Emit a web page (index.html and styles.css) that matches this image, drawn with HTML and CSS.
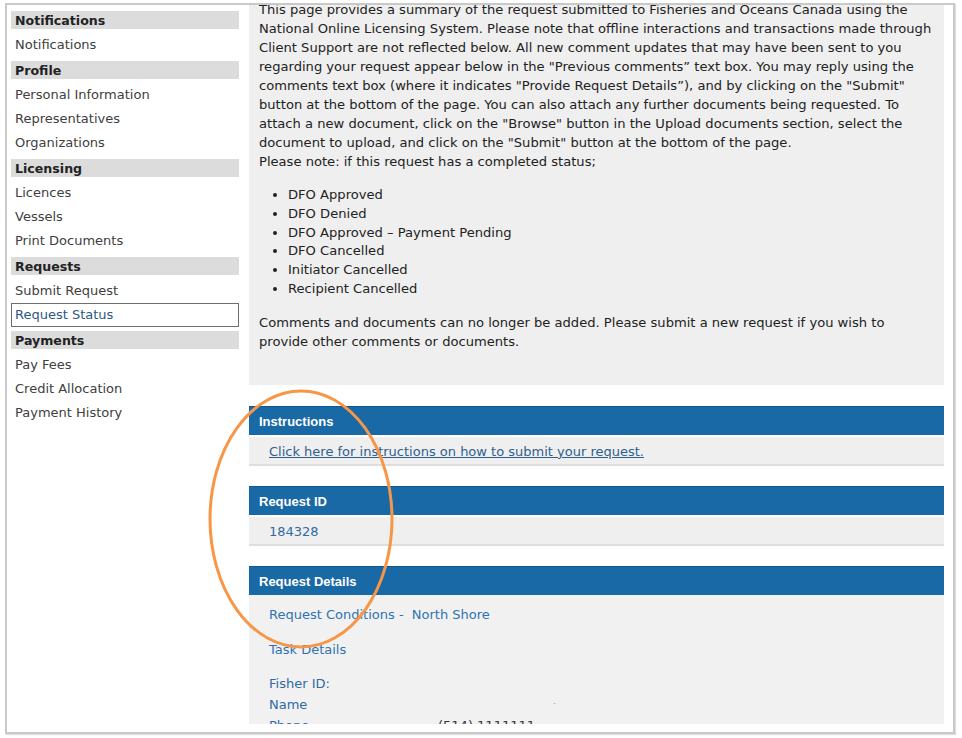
FILE: index.html
```html
<!DOCTYPE html>
<html lang="en">
<head>
<meta charset="utf-8">
<title>Request Status</title>
<link rel="stylesheet" href="styles.css">
</head>
<body>
<div class="frame">
  <div class="viewport">
    <nav class="sidebar">
      <div class="nav-group">
        <div class="nav-head">Notifications</div>
        <ul class="nav-list">
          <li class="nav-item">Notifications</li>
        </ul>
      </div>
      <div class="nav-group">
        <div class="nav-head">Profile</div>
        <ul class="nav-list">
          <li class="nav-item">Personal Information</li>
          <li class="nav-item">Representatives</li>
          <li class="nav-item">Organizations</li>
        </ul>
      </div>
      <div class="nav-group">
        <div class="nav-head">Licensing</div>
        <ul class="nav-list">
          <li class="nav-item">Licences</li>
          <li class="nav-item">Vessels</li>
          <li class="nav-item">Print Documents</li>
        </ul>
      </div>
      <div class="nav-group">
        <div class="nav-head">Requests</div>
        <ul class="nav-list">
          <li class="nav-item">Submit Request</li>
          <li class="nav-item nav-current">Request Status</li>
        </ul>
      </div>
      <div class="nav-group">
        <div class="nav-head">Payments</div>
        <ul class="nav-list">
          <li class="nav-item">Pay Fees</li>
          <li class="nav-item">Credit Allocation</li>
          <li class="nav-item">Payment History</li>
        </ul>
      </div>
    </nav>

    <main class="content">
      <div class="intro">
        <p class="intro-text">This page provides a summary of the request submitted to Fisheries and Oceans Canada using the<br>National Online Licensing System. Please note that offline interactions and transactions made through<br>Client Support are not reflected below. All new comment updates that may have been sent to you<br>regarding your request appear below in the "Previous comments” text box. You may reply using the<br>comments text box (where it indicates "Provide Request Details”), and by clicking on the "Submit"<br>button at the bottom of the page. You can also attach any further documents being requested. To<br>attach a new document, click on the "Browse" button in the Upload documents section, select the<br>document to upload, and click on the "Submit" button at the bottom of the page.<br>Please note: if this request has a completed status;</p>
        <ul class="status-list">
          <li>DFO Approved</li>
          <li>DFO Denied</li>
          <li>DFO Approved – Payment Pending</li>
          <li>DFO Cancelled</li>
          <li>Initiator Cancelled</li>
          <li>Recipient Cancelled</li>
        </ul>
        <p class="intro-text">Comments and documents can no longer be added. Please submit a new request if you wish to<br>provide other comments or documents.</p>
      </div>

      <section class="panel panel-first">
        <h2 class="panel-head">Instructions</h2>
        <div class="panel-row"><a class="panel-link" href="#">Click here for instructions on how to submit your request.</a></div>
      </section>

      <section class="panel">
        <h2 class="panel-head">Request ID</h2>
        <div class="panel-row"><span class="req-id">184328</span></div>
      </section>

      <section class="panel">
        <h2 class="panel-head">Request Details</h2>
        <div class="panel-body">
          <div class="detail-link">Request Conditions -&nbsp; North Shore</div>
          <div class="detail-link detail-task">Task Details</div>
          <div class="fields">
            <div class="field"><span class="field-label">Fisher ID:</span><span class="field-value"></span></div>
            <div class="field"><span class="field-label">Name</span><span class="field-value field-dot">.</span></div>
            <div class="field"><span class="field-label">Phone</span><span class="field-value">(514) 1111111</span></div>
          </div>
        </div>
      </section>
    </main>
  </div>
</div>
<svg class="annotation" width="962" height="738" viewBox="0 0 962 738" aria-hidden="true">
  <ellipse cx="301" cy="519" rx="91" ry="128" fill="none" stroke="#f79646" stroke-width="3"/>
</svg>
</body>
</html>
```

FILE: styles.css
```css
html, body {
  margin: 0;
  padding: 0;
  background: #ffffff;
}

body {
  font-family: "DejaVu Sans", Verdana, sans-serif;
  color: #222222;
  width: 962px;
  height: 738px;
  overflow: hidden;
  position: relative;
}

.frame {
  margin: 3px 0 0 5px;
  width: 946px;
  height: 727px;
  border: 2px solid #c9c9c9;
  box-shadow: 1px 1px 1px rgba(0, 0, 0, 0.12);
  background: #ffffff;
}

.viewport {
  height: 719px;
  overflow: hidden;
  display: flex;
  align-items: flex-start;
  padding-left: 4px;
  gap: 10px;
}

/* Sidebar */
.sidebar {
  width: 228px;
  flex: none;
  margin-top: 6px;
}

.nav-head {
  background: #dcdcdc;
  height: 18px;
  line-height: 19px;
  padding-left: 4px;
  font-size: 12.6px;
  font-weight: bold;
  color: #222222;
}

.nav-list {
  list-style: none;
  margin: 0;
  padding: 4px 0;
}

.nav-item {
  height: 24px;
  line-height: 24px;
  padding-left: 4px;
  font-size: 13px;
  color: #404040;
  box-sizing: border-box;
}

.nav-current {
  border: 1px solid #6e6e6e;
  color: #2d5886;
  padding-left: 3px;
  line-height: 22px;
}

/* Content */
.content {
  width: 695px;
  flex: none;
  margin-top: -5px;
  font-size: 13.1px;
}

.intro {
  background: #efefef;
  padding: 0 8px 34px 10px;
}

.intro-text {
  margin: 0;
  line-height: 19px;
  white-space: nowrap;
}

.status-list {
  margin: 15px 0 14px 0;
  padding-left: 29px;
  line-height: 18.8px;
}

.panel {
  margin-top: 20px;
}

.panel-first {
  margin-top: 21px;
}

.panel-head {
  margin: 0;
  height: 28px;
  line-height: 30px;
  border-top: 1px solid #0d5892;
  background: #1969a6;
  color: #ffffff;
  font-family: "Liberation Sans", Arial, sans-serif;
  font-size: 13px;
  font-weight: bold;
  padding-left: 10px;
}

.panel-row {
  margin-top: 2px;
  height: 25px;
  padding-top: 2px;
  line-height: 26px;
  background: #efefef;
  border-bottom: 2px solid #dedede;
  padding-left: 20px;
  font-size: 13px;
}

.panel-link {
  color: #2f5f8e;
  text-decoration: underline;
}

.req-id {
  color: #2f6aa2;
}

.panel-body {
  background: #f1f1f1;
  padding: 10px 0 20px 20px;
  font-size: 13px;
  height: 200px;
}

.detail-link {
  line-height: 19px;
  color: #2f73b1;
}

.detail-task {
  margin-top: 16px;
}

.fields {
  margin-top: 14px;
}

.field {
  display: flex;
  line-height: 21px;
}

.field-label {
  width: 169px;
  flex: none;
  color: #2f6aa6;
}

.field-value {
  color: #333333;
}

.field-dot {
  color: #9a9a9a;
  padding-left: 115px;
  font-size: 9px;
  line-height: 14px;
}

/* Annotation overlay */
.annotation {
  position: absolute;
  left: 0;
  top: 0;
  pointer-events: none;
}
```
